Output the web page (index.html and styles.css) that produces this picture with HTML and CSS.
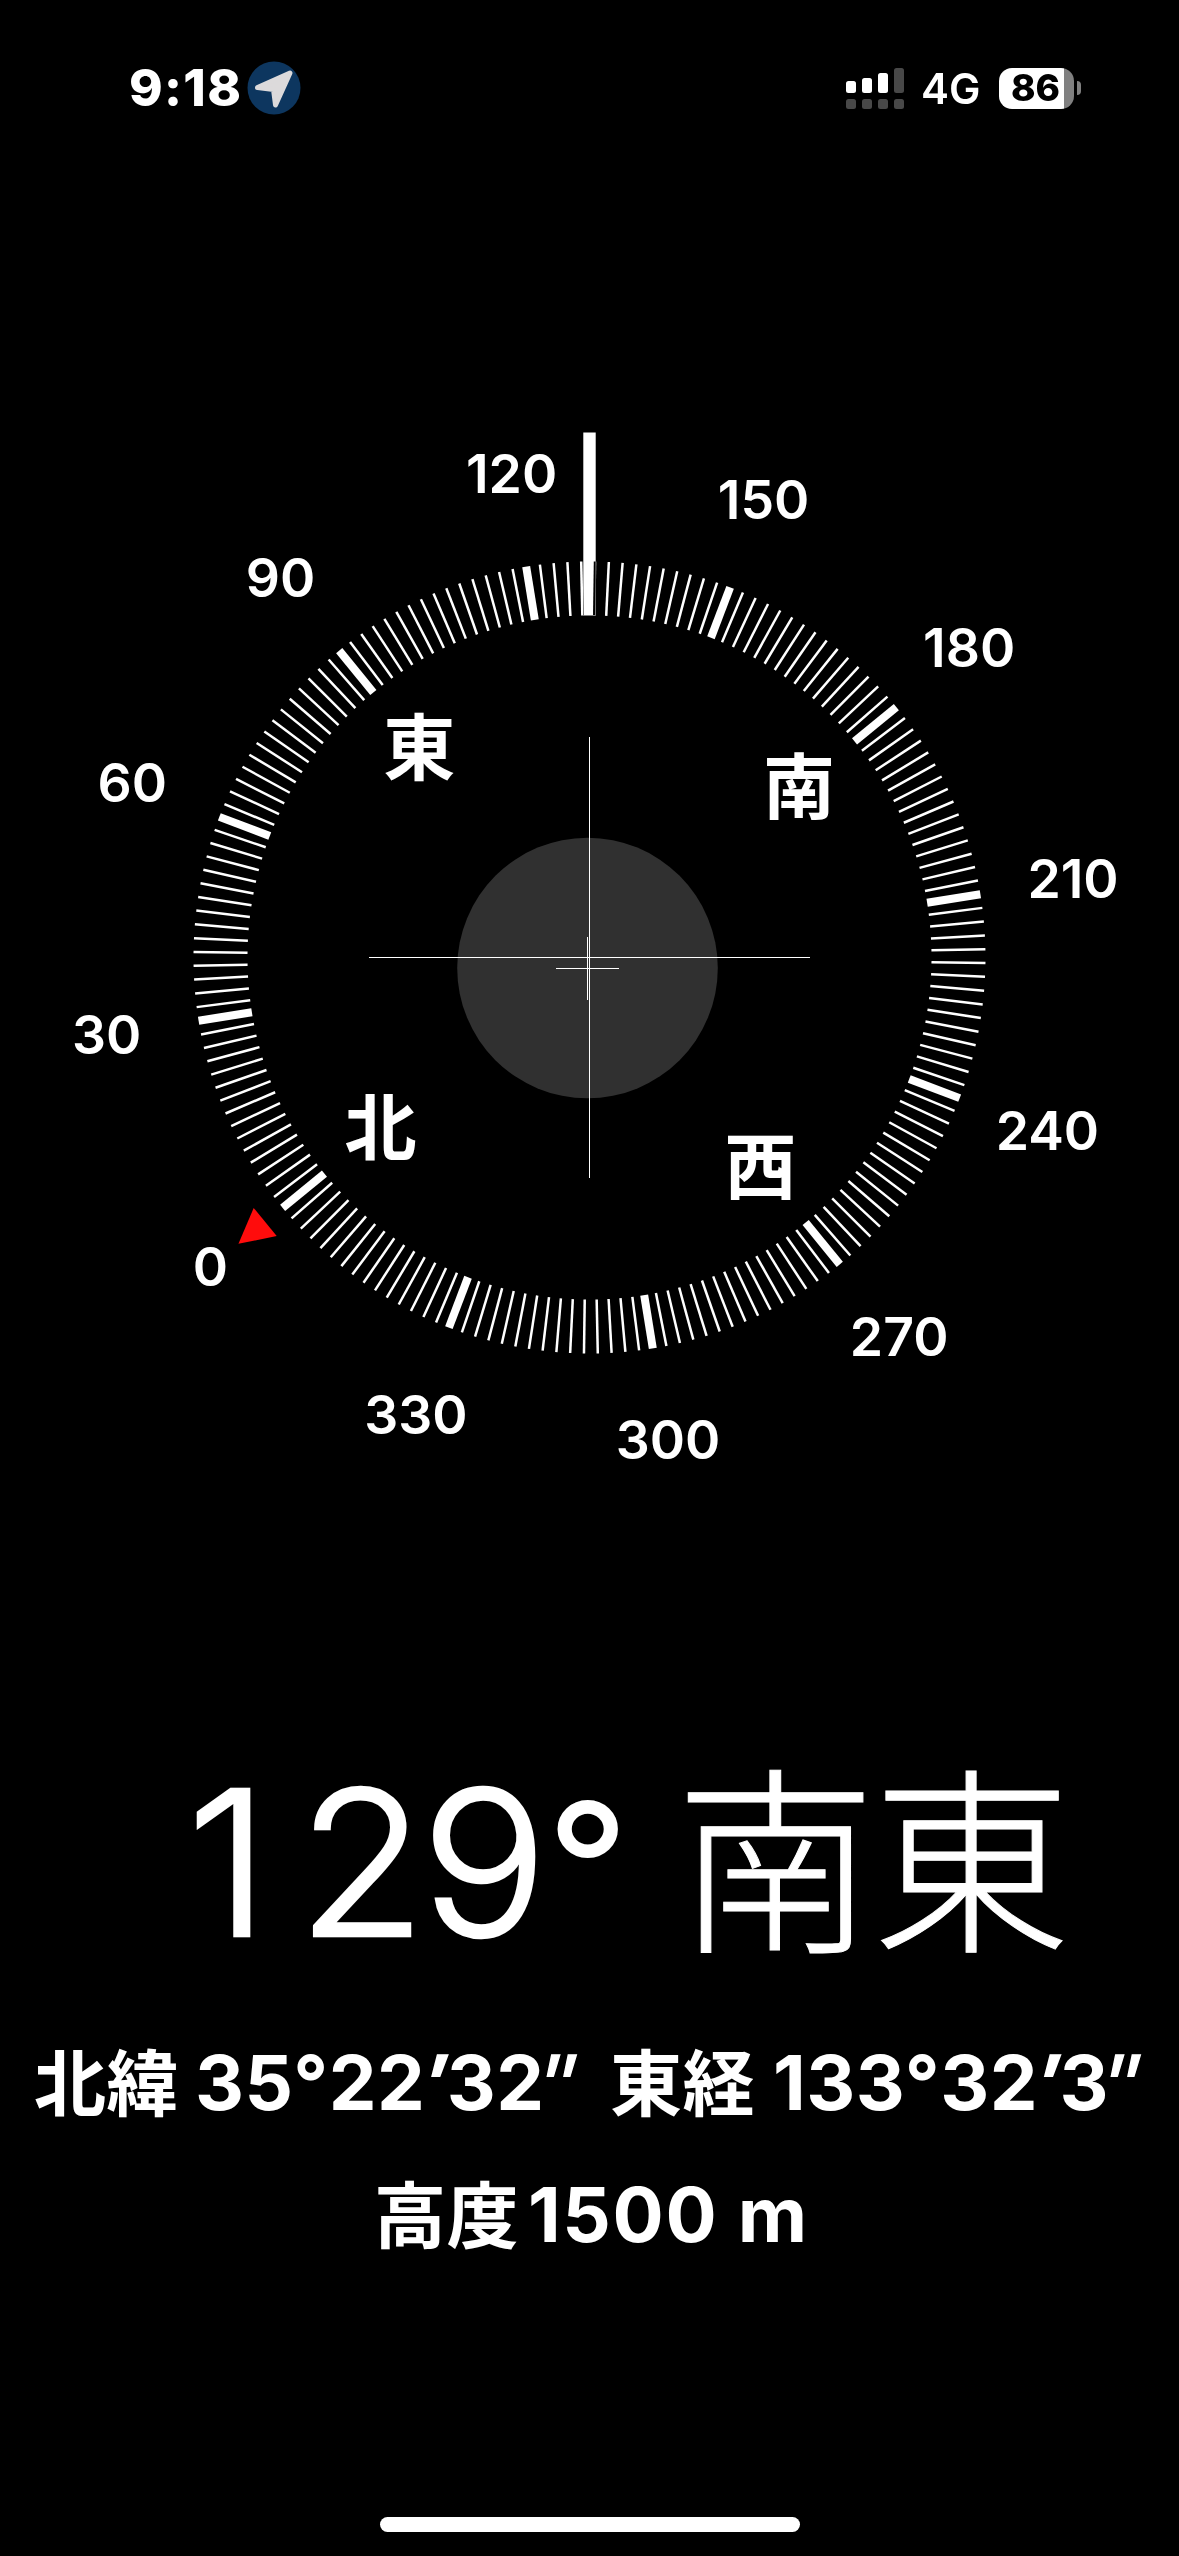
FILE: index.html
```html
<!DOCTYPE html>
<html lang="ja">

<head>
	<meta charset="utf-8">
	<title>コンパス</title>
	<link rel="stylesheet" href="styles.css">
</head>

<body>
	<header class="status">
		<div class="status-left">
			<span class="time">9:18</span>
			<svg class="location" viewBox="0 0 54 54">
				<circle cx="27" cy="27" r="26.5" />
				<path d="M10.5 26.5 L43 12 L28.5 44 L26.5 28.5 Z" />
			</svg>
		</div>
		<div class="status-right">
			<svg class="signal" viewBox="0 0 58 41">
				<rect x="0" y="13" width="10" height="12" rx="2.5" />
				<rect x="16" y="10" width="10" height="15" rx="2.5" />
				<rect x="32" y="5" width="10" height="20" rx="2.5" />
				<g class="off">
					<rect x="48" y="0" width="10" height="25" rx="2.5" />
					<rect x="0" y="31" width="10" height="10" rx="2.5" />
					<rect x="16" y="31" width="10" height="10" rx="2.5" />
					<rect x="32" y="31" width="10" height="10" rx="2.5" />
					<rect x="48" y="31" width="10" height="10" rx="2.5" />
				</g>
			</svg>
			<span class="network">4G</span>
			<div class="battery">86</div>
			<div class="battery-nub"></div>
		</div>
	</header>

	<main>
		<svg class="dial" viewBox="-589.5 -557.5 1179 1090">
			<circle class="level" cx="-2" cy="10.5" r="130.3" />
			<g id="rose"></g>
			<rect class="pointer" x="-6.2" y="-525" width="12.4" height="183" />
			<g class="cross">
				<rect x="-0.5" y="-220.5" width="1" height="441" />
				<rect x="-220.5" y="-0.5" width="441" height="1" />
				<rect x="-2.5" y="-20.5" width="1" height="63" />
				<rect x="-33.5" y="10.5" width="63" height="1" />
			</g>
		</svg>

		<h1 class="heading">
			<span class="degrees"><span class="one">1</span>29<span class="ring">°</span></span>
			<span class="direction">南東</span>
		</h1>
		<p class="coords">
			<span class="axis">北緯</span>
			<span class="lat">35°22<i>′</i>32<i class="seconds">″</i></span>
			<span class="axis">東経</span>
			<span class="lon">133°32<i>′</i>3<i class="seconds">″</i></span>
		</p>
		<p class="altitude">
			<span class="axis">高度</span>
			<span class="metres">1500 m</span>
		</p>
	</main>

	<div class="home-bar"></div>
	<script src="compass.js"></script>
</body>

</html>
```
FILE: styles.css
```css
body {
	margin: 0;
	width: 1179px;
	height: 2556px;
	display: flex;
	flex-direction: column;
	align-items: center;
	overflow: hidden;
	color: white;
	background-color: black;
	font-family: Inter, "Noto Sans CJK JP", sans-serif;
}

/* status bar */

.status {
	width: 100%;
	height: 176px;
	box-sizing: border-box;
	padding: 0 98px 0 129px;
	display: flex;
	justify-content: space-between;
	align-items: center;
}

.status-left, .status-right {
	display: flex;
	align-items: center;
	height: 100%;
}

.time {
	width: 111px;
	font-size: 51px;
	font-weight: 800;
	line-height: 60px;
	letter-spacing: 1.3px;
}

.location {
	width: 54px;
	height: 54px;
	margin-left: 7px;
}

.location circle {
	fill: #0d365f;
}

.location path {
	fill: #dcdadb;
	stroke: #dcdadb;
	stroke-width: 5;
	stroke-linejoin: round;
}

.signal {
	width: 58px;
	height: 41px;
	fill: white;
}

.signal .off {
	fill: #484848;
}

.network {
	width: 60px;
	margin: 1px 18px 0 17px;
	font-size: 42px;
	font-weight: 600;
	line-height: 50px;
}

.battery {
	width: 75px;
	height: 41px;
	border-radius: 13px;
	background: linear-gradient(to right, white 65px, #808080 65px);
	color: black;
	font-size: 37px;
	font-weight: 800;
	line-height: 40px;
	text-indent: 12px;
}

.battery-nub {
	width: 4px;
	height: 14px;
	margin-left: 3px;
	border-radius: 0 4px 4px 0;
	background: #808080;
}

/* compass */

main {
	width: 100%;
	padding-top: 224px;
	display: flex;
	flex-direction: column;
	align-items: center;
}

.dial {
	width: 1179px;
	height: 1090px;
	fill: white;
}

.level {
	fill: #303030;
}

.tick {
	stroke: white;
	stroke-width: 2.5;
}

.tick.major {
	stroke-width: 8;
}

/* ticks passing under the pointer stay visible */
.pointer {
	mix-blend-mode: difference;
}

.cross {
	shape-rendering: crispEdges;
}

.north {
	fill: #ff0c0c;
}

.number {
	font-size: 53.5px;
	font-weight: 600;
	text-anchor: middle;
}

.cardinal {
	font-family: "Noto Sans CJK JP", sans-serif;
	font-size: 72px;
	font-weight: 700;
	text-anchor: middle;
}

/* readout */

.heading {
	width: 100%;
	height: 260px;
	margin: 243px 0 0;
	padding-left: 187px;
	box-sizing: border-box;
	display: flex;
	align-items: baseline;
	font-size: 202px;
	font-weight: 300;
	line-height: 260px;
	white-space: nowrap;
}

.degrees {
	width: 489px;
	letter-spacing: -5px;
	transform: scaleX(1.04);
	transform-origin: 11px 0;
	-webkit-text-stroke: 2.5px white;
}

.one {
	margin-right: 32px;
}

.ring {
	position: relative;
	top: -9px;
	margin-left: 5px;
	font-size: 170px;
	line-height: 0;
	-webkit-text-stroke: 4px white;
}

.direction {
	position: relative;
	top: 1px;
	font-family: "Noto Sans CJK JP", sans-serif;
	font-size: 199px;
	line-height: 200px;
	letter-spacing: -3px;
	-webkit-text-stroke: 1px white;
}

.coords, .altitude {
	width: 100%;
	height: 100px;
	margin: 0;
	box-sizing: border-box;
	display: flex;
	align-items: baseline;
	font-size: 76px;
	font-weight: 700;
	line-height: 100px;
	letter-spacing: 0.5px;
	white-space: nowrap;
}

.coords {
	margin-top: 36px;
	padding-left: 34px;
}

.altitude {
	margin-top: 32px;
	padding-left: 374px;
}

.axis {
	width: 144px;
	font-family: "Noto Sans CJK JP", sans-serif;
	font-size: 72px;
}

.lat {
	width: 415px;
	margin-left: 17px;
}

.lon {
	margin-left: 19px;
}

.coords i {
	-webkit-text-stroke: 1.5px white;
}

.seconds {
	display: inline-block;
	margin-left: -3px;
	transform: scaleX(0.8);
	transform-origin: left;
}

.metres {
	margin-left: 10px;
	letter-spacing: 1.6px;
}

.home-bar {
	width: 420px;
	height: 15px;
	margin: auto 0 24px;
	border-radius: 8px;
	background: white;
}
```
FILE: compass.js
```javascript
const svgNS = 'http://www.w3.org/2000/svg';
const heading = 129.2;
const cardinals = { 0: '北', 90: '東', 180: '南', 270: '西' };
const rose = document.getElementById('rose');

function add(name, attrs, text) {
	let elm = document.createElementNS(svgNS, name);
	for (let key in attrs) {
		elm.setAttribute(key, attrs[key]);
	}
	if (text !== undefined) {
		elm.textContent = text;
	}
	rose.appendChild(elm);
}

// upright label centered at the given bearing
function label(cls, bearing, radius, drop, text) {
	let a = (bearing - heading) * Math.PI / 180;
	add('text', {
		class: cls,
		x: radius * Math.sin(a) + 0.3,
		y: -radius * Math.cos(a) + drop
	}, text);
}

for (let deg = 0; deg < 360; deg += 2) {
	add('line', {
		class: deg % 30 == 0 ? 'tick major' : 'tick',
		y1: -396,
		y2: -342,
		transform: 'rotate(' + (deg - heading) + ')'
	});
}

for (let deg = 0; deg < 360; deg += 30) {
	label('number', deg, 489.5, 18.7, deg);
}

for (let deg in cardinals) {
	label('cardinal', deg, 270, 26.2, cardinals[deg]);
}

// north marker
add('path', {
	class: 'north',
	d: 'M0 -453 L18.2 -418.5 L-18.2 -418.5 Z',
	transform: 'rotate(' + (-heading) + ')'
});
```
